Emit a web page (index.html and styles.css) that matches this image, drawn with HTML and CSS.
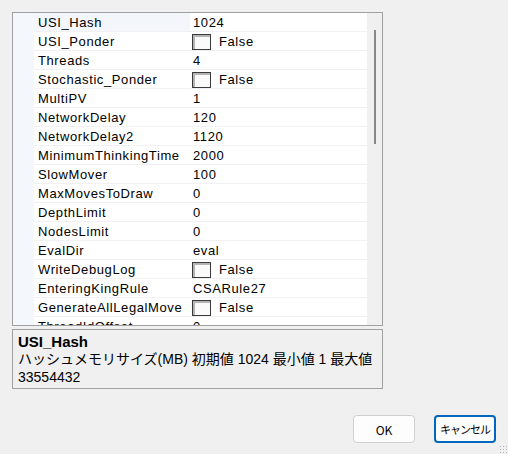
FILE: index.html
```html
<!DOCTYPE html>
<html lang="ja">
<head>
<meta charset="utf-8">
<link rel="stylesheet" href="styles.css">
</head>
<body>
<div class="dialog">
  <div class="grid">
    <div class="gutter"></div>
    <div class="rows">
      <div class="row sel"><div class="name">USI_Hash</div><div class="val">1024</div></div>
      <div class="row"><div class="name">USI_Ponder</div><div class="val"><span class="cb"></span>False</div></div>
      <div class="row"><div class="name">Threads</div><div class="val">4</div></div>
      <div class="row"><div class="name">Stochastic_Ponder</div><div class="val"><span class="cb"></span>False</div></div>
      <div class="row"><div class="name">MultiPV</div><div class="val">1</div></div>
      <div class="row"><div class="name">NetworkDelay</div><div class="val">120</div></div>
      <div class="row"><div class="name">NetworkDelay2</div><div class="val">1120</div></div>
      <div class="row"><div class="name">MinimumThinkingTime</div><div class="val">2000</div></div>
      <div class="row"><div class="name">SlowMover</div><div class="val">100</div></div>
      <div class="row"><div class="name">MaxMovesToDraw</div><div class="val">0</div></div>
      <div class="row"><div class="name">DepthLimit</div><div class="val">0</div></div>
      <div class="row"><div class="name">NodesLimit</div><div class="val">0</div></div>
      <div class="row"><div class="name">EvalDir</div><div class="val">eval</div></div>
      <div class="row"><div class="name">WriteDebugLog</div><div class="val"><span class="cb"></span>False</div></div>
      <div class="row"><div class="name">EnteringKingRule</div><div class="val">CSARule27</div></div>
      <div class="row"><div class="name">GenerateAllLegalMove</div><div class="val"><span class="cb"></span>False</div></div>
      <div class="row"><div class="name">ThreadIdOffset</div><div class="val">0</div></div>
    </div>
    <div class="scroll"><div class="thumb"></div></div>
  </div>
  <div class="desc">
    <div class="desc-title">USI_Hash</div>
    <div class="desc-text">ハッシュメモリサイズ(MB) 初期値 1024 最小値 1 最大値 33554432</div>
  </div>
  <div class="buttons">
    <button class="btn">OK</button>
    <button class="btn primary">キャンセル</button>
  </div>
  <div class="grip"></div>
</div>
</body>
</html>
```

FILE: styles.css
```css
html, body {
  margin: 0;
  padding: 0;
  background: #f0f0f0;
}
body {
  width: 508px;
  height: 454px;
  overflow: hidden;
  font-family: "Liberation Sans", "Noto Sans CJK JP", sans-serif;
  font-size: 13px;
  color: #000;
}
.dialog {
  position: relative;
  height: 454px;
  padding: 12px 12px 0 12px;
  box-sizing: border-box;
  display: flex;
  flex-direction: column;
}
.grid {
  width: 371px;
  height: 314px;
  box-sizing: border-box;
  border: 1px solid #a0a0a0;
  display: flex;
  overflow: hidden;
  background: #fff;
}
.gutter {
  width: 21px;
  flex: none;
  background: #f4f7fc;
}
.rows {
  width: 333px;
  flex: none;
  display: flex;
  flex-direction: column;
  overflow: hidden;
}
.row {
  display: flex;
  height: 18px;
  flex: none;
  border-bottom: 1px solid #f0f0f5;
  line-height: 20px;
  letter-spacing: 0.6px;
}
.name {
  width: 156px;
  height: 18px;
  flex: none;
  padding-left: 4px;
  box-sizing: border-box;
  white-space: nowrap;
}
.row.sel .name {
  background: #f3f6fb;
}
.val {
  flex: 1;
  height: 18px;
  padding-left: 3px;
  display: flex;
  align-items: flex-start;
  white-space: nowrap;
  box-sizing: border-box;
}
.cb {
  display: inline-block;
  width: 19px;
  height: 16px;
  box-sizing: border-box;
  border: 1px solid #3a3a3a;
  box-shadow: inset 2px 2px 0 #b4b4b4;
  background: #fafafa;
  margin-left: -1px;
  margin-right: 8px;
  margin-top: 2px;
}
.scroll {
  width: 16px;
  flex: none;
  background: #f0f0f0;
  padding-top: 17px;
  box-sizing: border-box;
  display: flex;
  justify-content: center;
}
.thumb {
  width: 2px;
  height: 114px;
  background: #878787;
  margin-left: -1px;
}
.desc {
  margin-top: 3px;
  width: 371px;
  height: 60px;
  box-sizing: border-box;
  border: 1px solid #a0a0a0;
  padding: 2px 4px 0 5px;
  line-height: 17px;
}
.desc-title {
  font-weight: bold;
  font-size: 15px;
  line-height: 16px;
  padding-top: 2px;
}
.desc-text {
  font-size: 14px;
  line-height: 18px;
  letter-spacing: 0;
}
.buttons {
  margin-top: 26px;
  display: flex;
  justify-content: flex-end;
  gap: 19px;
}
.btn {
  width: 62px;
  height: 28px;
  box-sizing: border-box;
  border: 1px solid #d0d0d0;
  border-radius: 4px;
  background: #fdfdfd;
  font-family: "Noto Sans CJK JP", "Liberation Sans", sans-serif;
  font-size: 12px;
  color: #000;
  padding: 0;
  white-space: nowrap;
}
.btn.primary {
  border: 2px solid #0067c0;
  font-size: 11px;
  letter-spacing: -1px;
}
.grip {
  position: absolute;
  right: 1px;
  bottom: 1px;
  width: 8px;
  height: 8px;
  background-image: radial-gradient(circle, #b0b0b0 0.8px, transparent 1px);
  background-size: 3px 3px;
}
```
